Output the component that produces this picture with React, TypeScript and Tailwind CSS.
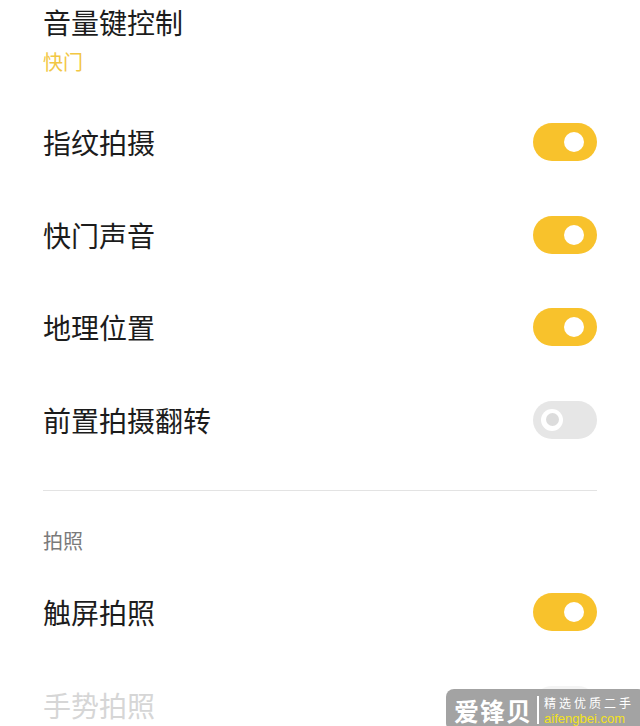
import React from 'react';

type Row = { label: string; on: boolean; disabled?: boolean };

const TOP_ROWS: Row[] = [
  { label: '指纹拍摄', on: true },
  { label: '快门声音', on: true },
  { label: '地理位置', on: true },
  { label: '前置拍摄翻转', on: false },
];

const Toggle = ({ on, disabled }: { on: boolean; disabled?: boolean }) => {
  if (on) {
    return (
      <div className={`relative w-[64px] h-[38px] rounded-full bg-[#f8c22c] shrink-0 ${disabled ? 'opacity-20' : ''}`}>
        <div className="absolute right-[13px] top-[9px] w-[20px] h-[20px] rounded-full bg-white" />
      </div>
    );
  }
  return (
    <div className={`relative w-[64px] h-[38px] rounded-full bg-[#e6e6e6] shrink-0 ${disabled ? 'opacity-40' : ''}`}>
      <div className="absolute left-[8px] top-[8px] w-[22px] h-[22px] rounded-full bg-white flex items-center justify-center">
        <div className="w-[13px] h-[13px] rounded-full bg-[#dcdcdc]" />
      </div>
    </div>
  );
};

const SettingRow = ({ label, on, disabled }: Row) => (
  <div className="h-[92.5px] flex items-center justify-between">
    <span className={`text-[28px] leading-[36px] ${disabled ? 'text-[#d6d6d6]' : 'text-[#1c1c1c]'}`}>{label}</span>
    <Toggle on={on} disabled={disabled} />
  </div>
);

export default function App() {
  return (
    <div
      className="relative w-[640px] h-[726px] overflow-hidden bg-white px-[43px]"
      style={{ fontFamily: '"Noto Sans CJK SC", "Noto Sans", sans-serif' }}
    >
      {/* Volume key */}
      <div className="pt-[4px] text-[28px] leading-[36px] text-[#1c1c1c]">音量键控制</div>
      <div className="mt-[8px] text-[20px] leading-[28px] text-[#f2c744]">快门</div>

      <div className="mt-[20px]">
        {TOP_ROWS.map(r => (
          <SettingRow key={r.label} {...r} />
        ))}
      </div>

      <div className="mt-[24px] h-px bg-[#e3e3e3]" />

      {/* Photo section */}
      <div className="mt-[36px] text-[20px] leading-[28px] text-[#7a7a7a]">拍照</div>
      <div className="mt-[11px]">
        <SettingRow label="触屏拍照" on />
        <SettingRow label="手势拍照" on={false} disabled />
      </div>

      {/* watermark */}
      <div className="absolute left-[446px] top-[689px] w-[200px] h-[42px] rounded-[8px] bg-[#999999]/90 flex items-center pl-[8px]">
        <span className="text-[25px] leading-none font-bold text-white tracking-[1px]">爱锋贝</span>
        <div className="mx-[5px] w-[2px] h-[28px] bg-white" />
        <div className="flex flex-col">
          <span className="text-[12px] leading-[18px] text-white tracking-[3px]">精选优质二手</span>
          <span className="text-[13px] leading-[14px] text-[#f3e21c]" style={{ fontFamily: '"Liberation Sans", sans-serif' }}>aifengbei.com</span>
        </div>
      </div>
    </div>
  );
}
